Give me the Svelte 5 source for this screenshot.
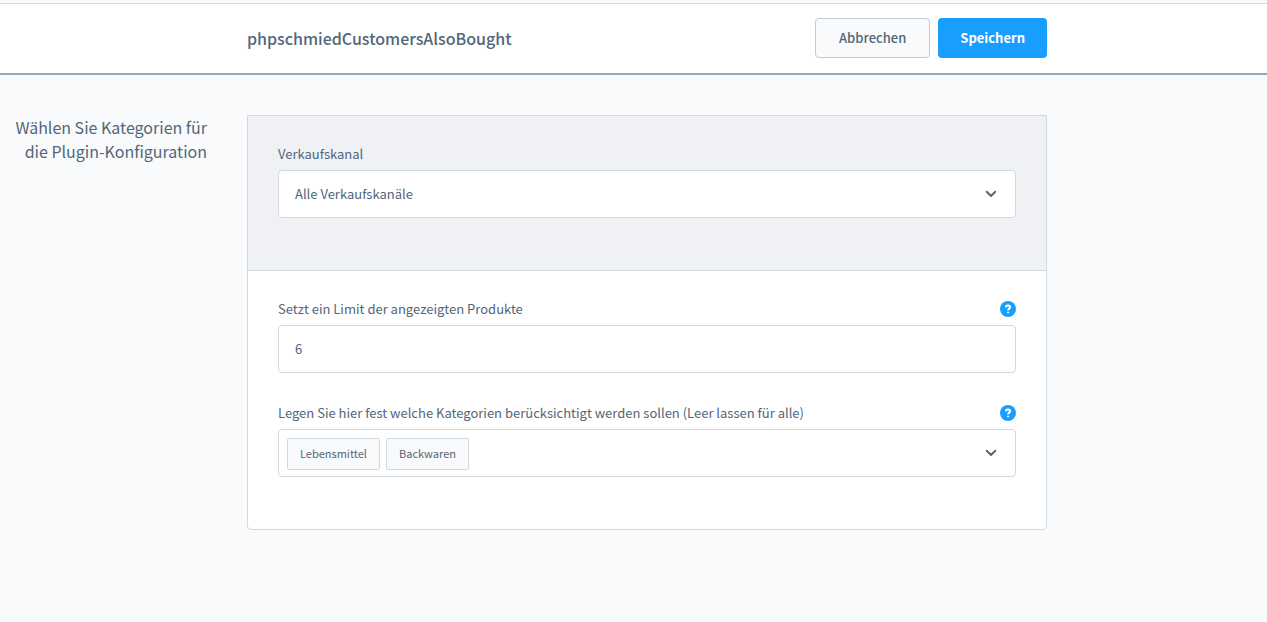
<script lang="ts">
  const channels = ["Alle Verkaufskanäle", "Storefront", "Headless"];

  let channel = $state("Alle Verkaufskanäle");
  let limit = $state("6");
  let categories = $state(["Lebensmittel", "Backwaren"]);
  let search = $state("");

  function onSearchKey(e: KeyboardEvent) {
    if (e.key === "Backspace" && search === "") {
      categories = categories.slice(0, -1);
    }
  }
</script>

{#snippet chevron()}
  <svg class="chevron" viewBox="0 0 12 8" aria-hidden="true">
    <path d="M1.7 1.8 6 6l4.3-4.2" />
  </svg>
{/snippet}

{#snippet help()}
  <button class="help" type="button" aria-label="Hilfe">
    <svg viewBox="0 0 16 16" aria-hidden="true">
      <circle cx="8" cy="8" r="8" />
      <path d="M5.9 6.3C5.9 5 6.8 4.5 8 4.5s2.1.7 2.1 1.8c0 1.3-2 1.3-2 2.9" />
      <rect x="7.1" y="10.7" width="1.9" height="1.5" />
    </svg>
  </button>
{/snippet}

<div class="page">
  <header class="smart-bar">
    <div class="smart-bar-content">
      <h2>phpschmiedCustomersAlsoBought</h2>
      <div class="actions">
        <button class="btn" type="button">Abbrechen</button>
        <button class="btn primary" type="button">Speichern</button>
      </div>
    </div>
  </header>

  <main class="content">
    <h1 class="side-title">Wählen Sie Kategorien für die Plugin-Konfiguration</h1>

    <div class="card">
      <section class="section channel">
        <div class="field">
          <div class="field-head">
            <label for="channel">Verkaufskanal</label>
          </div>
          <div class="select-wrap">
            <select id="channel" class="control" bind:value={channel}>
              {#each channels as name}
                <option>{name}</option>
              {/each}
            </select>
            {@render chevron()}
          </div>
        </div>
      </section>

      <section class="section">
        <div class="field">
          <div class="field-head">
            <label for="limit">Setzt ein Limit der angezeigten Produkte</label>
            {@render help()}
          </div>
          <input id="limit" class="control" type="text" inputmode="numeric" bind:value={limit} />
        </div>

        <div class="field">
          <div class="field-head">
            <label for="categories">
              Legen Sie hier fest welche Kategorien berücksichtigt werden sollen (Leer lassen für alle)
            </label>
            {@render help()}
          </div>
          <div class="multi-select">
            <ul class="chips">
              {#each categories as category}
                <li>{category}</li>
              {/each}
            </ul>
            <input
              id="categories"
              class="search"
              type="text"
              autocomplete="off"
              bind:value={search}
              onkeydown={onSearchKey}
            />
            {@render chevron()}
          </div>
        </div>
      </section>
    </div>
  </main>
</div>

<style>
  :global(body) {
    background: #f9fafc;
  }

  .page {
    --text: #52667a;
    --border: #d1d9e0;
    --blue: #189eff;
    --sans: "Source Sans Pro", "Noto Sans CJK SC", "Noto Sans", sans-serif;
    padding-top: 3px;
    font-family: var(--sans);
    font-size: 13px;
    color: var(--text);
  }

  .page * {
    box-sizing: border-box;
  }

  button,
  input,
  select {
    font: inherit;
    color: inherit;
  }

  .smart-bar {
    padding: 14px 0 15px;
    background: #fff;
    border-top: 1px solid var(--border);
    border-bottom: 2px solid #98a7b5;
  }

  .smart-bar-content,
  .content {
    display: grid;
    grid-template-columns: 247px minmax(0, 800px) minmax(0, 1fr);
  }

  .smart-bar-content > * {
    grid-row: 1;
    grid-column: 2;
    align-self: center;
  }

  h2 {
    margin: 0;
    font-size: 16px;
    font-weight: 500;
    line-height: 24px;
  }

  .actions {
    display: flex;
    gap: 8px;
    justify-self: end;
  }

  .btn {
    height: 40px;
    padding: 0 23px;
    border: 1px solid #c2ccd6;
    border-radius: 4px;
    background: #f9fafb;
    font-weight: 500;
    line-height: 38px;
    cursor: pointer;
  }

  .btn.primary {
    padding: 0 22px;
    border: 0;
    background: var(--blue);
    color: #fff;
    font-weight: 700;
  }

  .content {
    padding: 40px 0;
  }

  .side-title {
    margin: 0;
    padding-right: 40px;
    font-size: 16px;
    font-weight: 400;
    line-height: 24px;
    text-align: right;
  }

  .card {
    border: 1px solid var(--border);
    border-radius: 0 0 4px 4px;
    background: #fff;
  }

  .section {
    display: flex;
    flex-direction: column;
    gap: 32px;
    padding: 30px 30px 52px;
  }

  .section.channel {
    background: #f0f1f5;
    border-bottom: 1px solid var(--border);
  }

  .field-head {
    display: flex;
    align-items: center;
    justify-content: space-between;
    margin-bottom: 8px;
    line-height: 16px;
  }

  .control {
    display: block;
    width: 100%;
    height: 48px;
    padding: 0 16px 2px;
    border: 1px solid var(--border);
    border-radius: 4px;
    background: #fff;
    appearance: none;
  }

  .select-wrap {
    display: grid;
    align-items: center;
  }

  .select-wrap > :global(*) {
    grid-area: 1 / 1;
  }

  .select-wrap .chevron {
    justify-self: end;
    margin-right: 19px;
  }

  .chevron {
    flex: none;
    width: 12px;
    height: 8px;
    margin-right: 18px;
    fill: none;
    stroke: var(--text);
    stroke-width: 2;
    stroke-linecap: round;
    stroke-linejoin: round;
    pointer-events: none;
  }

  .help {
    flex: none;
    width: 16px;
    height: 16px;
    padding: 0;
    border: 0;
    background: none;
    cursor: pointer;
  }

  .help svg {
    display: block;
    fill: var(--blue);
  }

  .help path {
    fill: none;
    stroke: #fff;
    stroke-width: 2;
  }

  .help rect {
    fill: #fff;
  }

  .multi-select {
    display: flex;
    align-items: center;
    border: 1px solid var(--border);
    border-radius: 4px;
    background: #fff;
  }

  .chips {
    display: flex;
    flex-wrap: wrap;
    gap: 6px;
    margin: 0;
    padding: 8px 8px 6px;
    list-style: none;
  }

  .chips li {
    padding: 0 12px 2px;
    border: 1px solid var(--border);
    border-radius: 2px;
    background: #f9fafb;
    font-size: 11px;
    line-height: 28px;
  }

  .search {
    flex: 1;
    min-width: 0;
    height: 32px;
    padding: 0;
    border: 0;
    outline: none;
    background: transparent;
  }

  .control:focus,
  .multi-select:focus-within {
    border-color: var(--blue);
    outline: none;
  }
</style>
